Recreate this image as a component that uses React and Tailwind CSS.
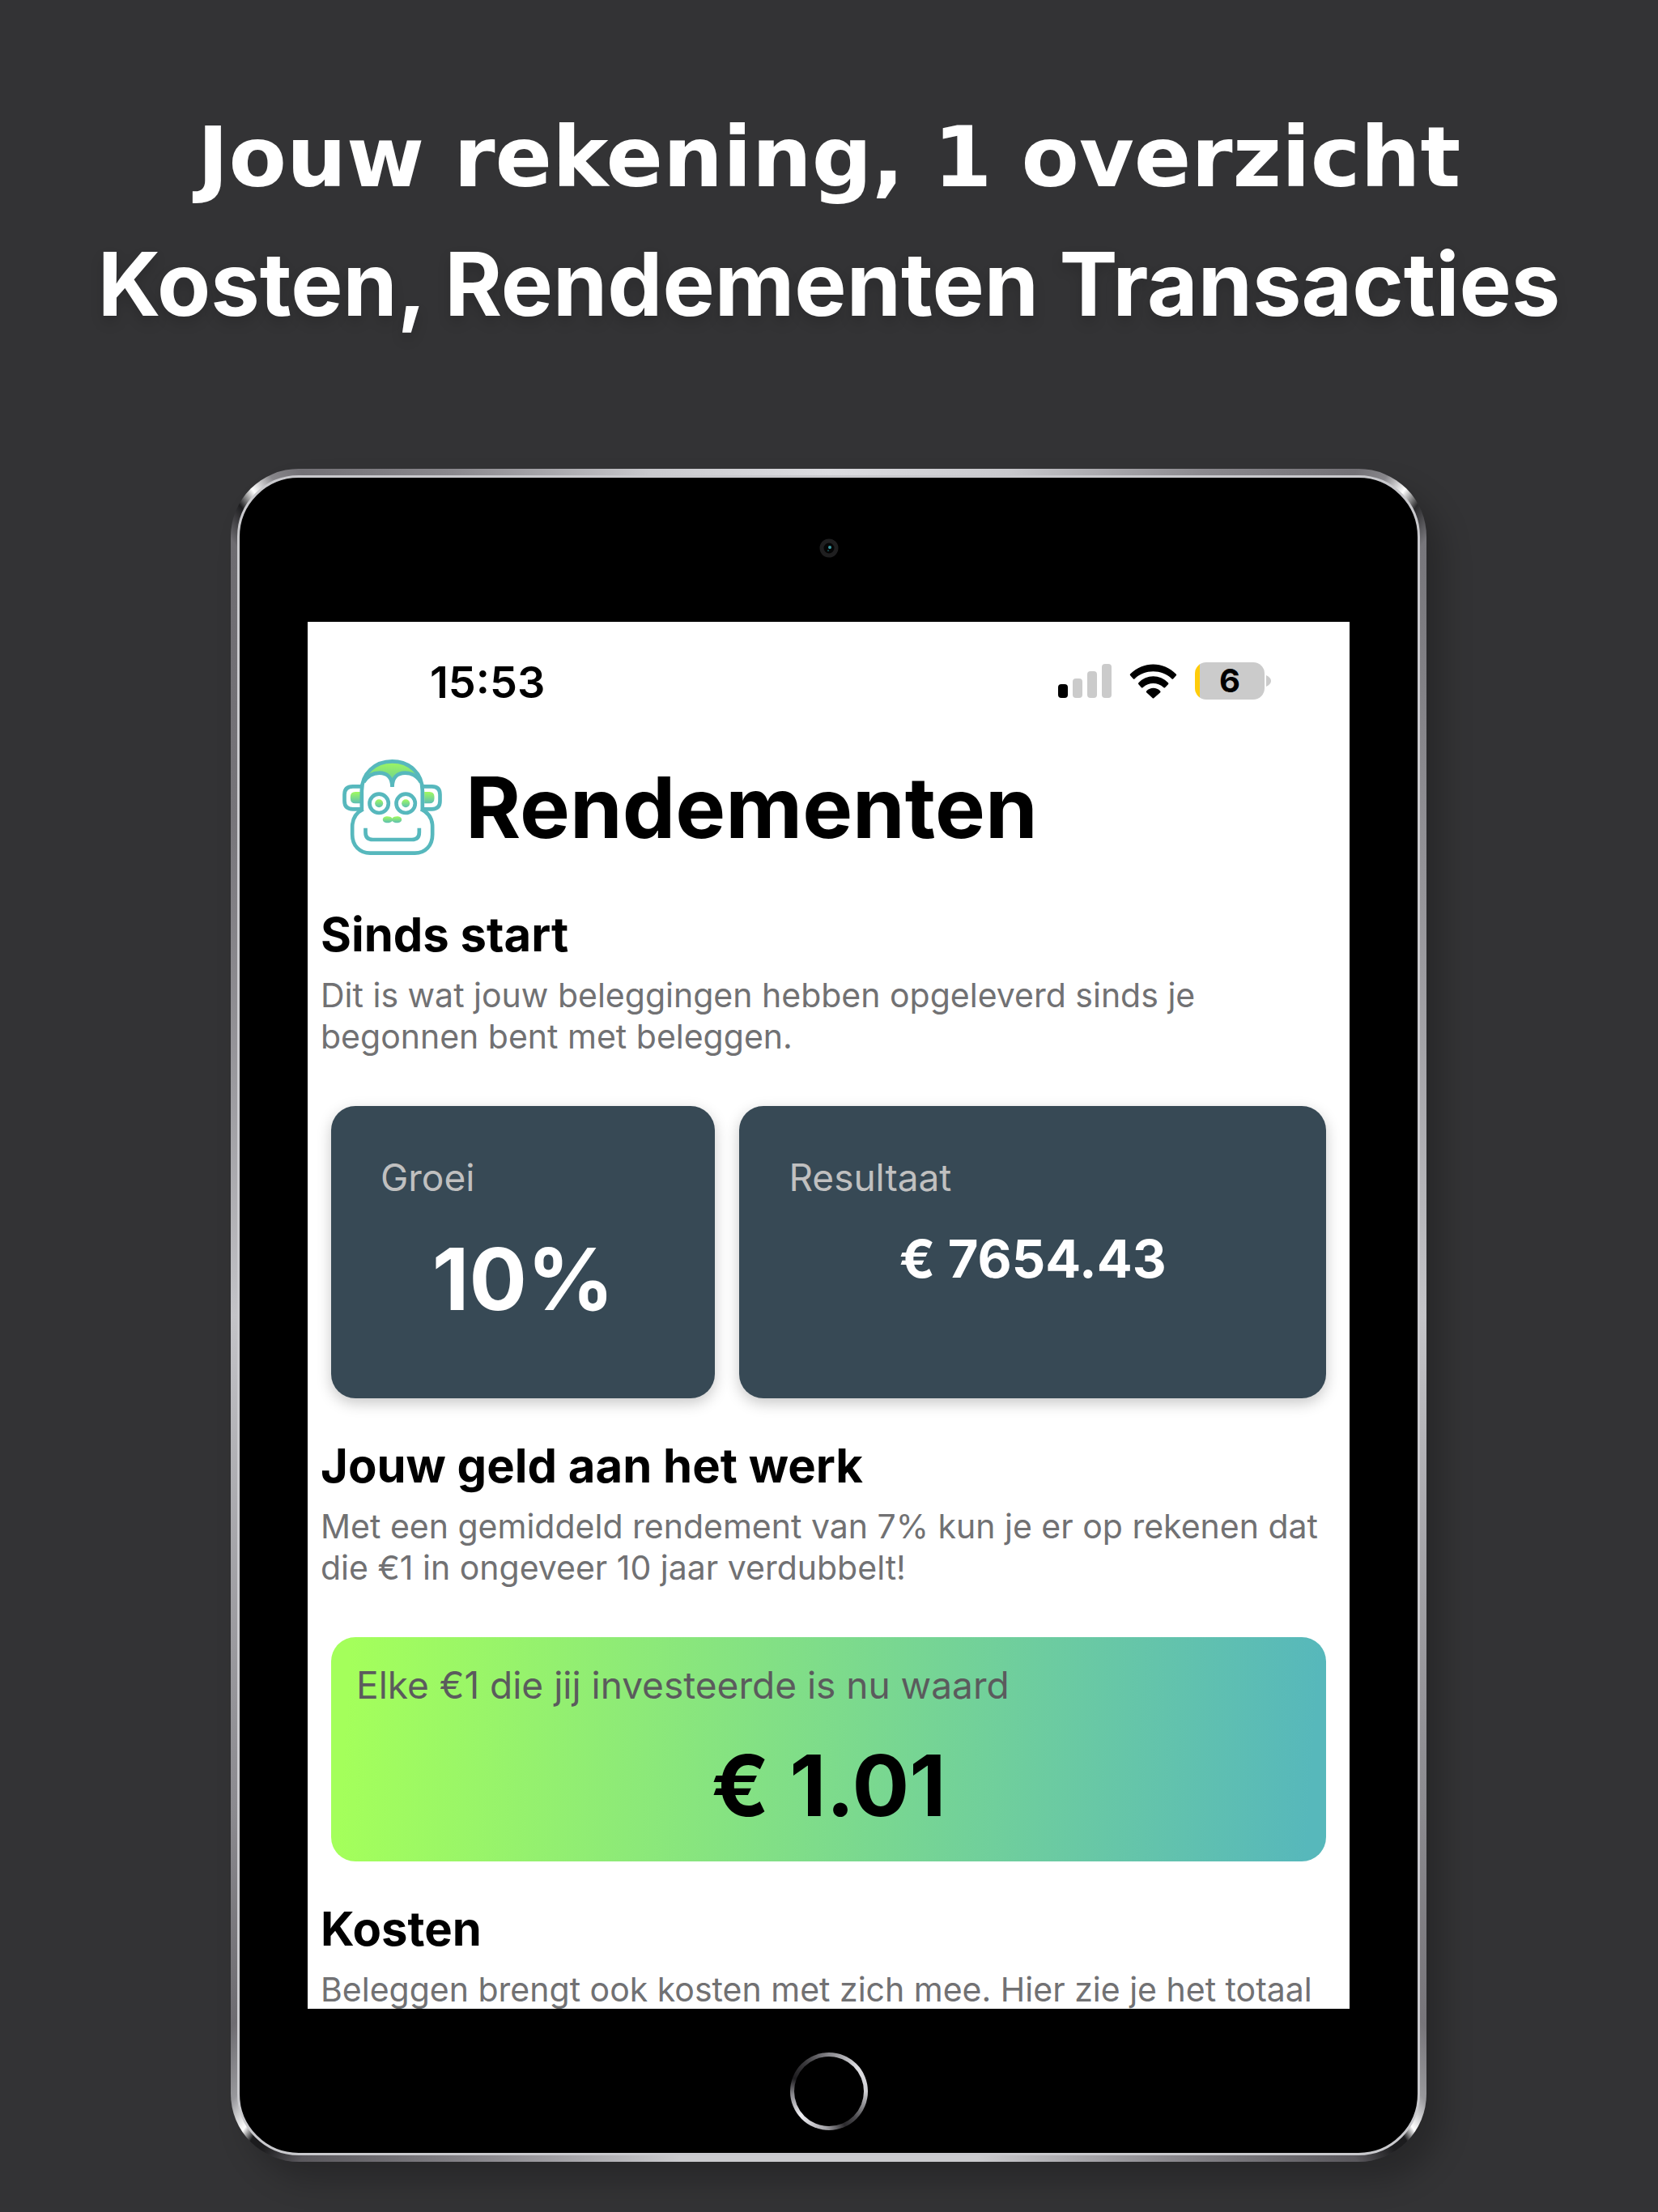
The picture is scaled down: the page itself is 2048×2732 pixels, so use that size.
import React from "react";

const frame =
  "conic-gradient(from 0deg, #dcdce0 0deg, #c9c9cd 12deg, #8b898e 24deg, #737176 32deg, #87868a 33.6deg, #ffffff 34.9deg, #2a2a2c 36deg, #77767b 37.6deg, #8f8e93 50deg, #c4c4c8 90deg, #8b8a8f 130deg, #77757a 140deg, #98989c 142.8deg, #ffffff 144.3deg, #1c1c1e 145deg, #1c1c1e 145.8deg, #5a585d 148deg, #8b898e 158deg, #cbcbce 170deg, #cbcbce 190deg, #8b898e 202deg, #5a585d 212deg, #1c1c1e 214.2deg, #1c1c1e 215deg, #ffffff 215.7deg, #98989c 217.2deg, #6e6c71 220deg, #8b8a8f 230deg, #c4c4c8 270deg, #77757a 310deg, #6e6c71 322.4deg, #1c1c1e 324deg, #ffffff 325.1deg, #87868a 326.4deg, #737176 328deg, #8b898e 336deg, #c9c9cd 348deg, #dcdce0 360deg)";

function Monkey() {
  return (
    <svg viewBox="64 78 380 366" className="h-[122px] w-[127px] shrink-0" fill="none" aria-hidden="true">
      <defs>
        <linearGradient id="leaf" x1="0" y1="0" x2="0" y2="1">
          <stop offset="0" stopColor="#9ff760" />
          <stop offset="1" stopColor="#6fd28f" />
        </linearGradient>
        <linearGradient id="ear" x1="0" y1="0" x2="0" y2="1">
          <stop offset="0" stopColor="#a0fa5e" />
          <stop offset="1" stopColor="#5cbfb4" />
        </linearGradient>
      </defs>
      <path d="M158 150C176 112 210 91 254 91S332 112 350 150C330 130 268 118 254 164C240 118 178 130 158 150Z" fill="url(#leaf)" />
      <path d="M99 222Q99 204 117 204H136V247H117Q99 247 99 229ZM410 222Q410 204 392 204H373V247H392Q410 247 410 229Z" fill="url(#ear)" />
      <g stroke="#57b8bd" strokeWidth="14">
        <path d="M141 276V200C141 135 190 91 254 91S366 135 366 200V276" />
        <path d="M141 184H108Q77 184 77 214V238Q77 268 108 268H141M366 184H401Q431 184 431 214V238Q431 268 401 268H366" />
        <path d="M146 268C118 282 106 304 106 334V362C106 404 134 431 172 431H338C376 431 403 404 403 362V334C403 304 391 282 361 268" />
        <path d="M148 168C162 146 182 134 206 134C234 134 254 150 254 186C254 150 274 134 302 134C326 134 348 148 360 168" />
        <circle cx="205" cy="247" r="35" />
        <circle cx="304" cy="247" r="35" />
        <path d="M155 338V354Q155 381 182 381H327Q354 381 354 354V338" />
      </g>
      <circle cx="205" cy="247" r="15" fill="url(#ear)" />
      <circle cx="304" cy="247" r="15" fill="url(#ear)" />
      <path d="M219 307C219 292 246 292 254 302C262 292 289 292 289 307C289 322 262 322 254 312C246 322 219 322 219 307Z" fill="url(#ear)" />
    </svg>
  );
}

function StatusIcons() {
  return (
    <div className="flex items-center">
      <svg viewBox="0 0 66 42" className="mr-[22px] h-[42px] w-[66px]" aria-hidden="true">
        <rect x="0" y="25" width="12" height="17" rx="4" fill="#000" />
        <rect x="18" y="18" width="12" height="24" rx="4" fill="#cbcbcb" />
        <rect x="36" y="9" width="12" height="33" rx="4" fill="#cbcbcb" />
        <rect x="54" y="0" width="12" height="42" rx="4" fill="#cbcbcb" />
      </svg>
      <svg viewBox="345 778 176 128" className="mr-[22px] h-[43px] w-[59px]" aria-hidden="true">
        <path d="M348 815Q346 818 349 821L359 832Q362 835 365 832C402 797 464 797 501 832Q504 835 507 832L517 821Q520 818 517 815C470 767 396 767 348 815Z" />
        <path d="M379 847Q376 850 379 853L389 864Q392 867 395 864C417 845 449 845 471 864Q474 867 477 864L488 853Q491 850 488 847C458 815 408 815 379 847Z" />
        <path d="M408 878Q406 881 408 883L430 903Q433 906 436 903L459 883Q461 881 459 878C445 863 422 863 408 878Z" />
      </svg>
      <div className="w-[86px] rounded-[14px] bg-linear-to-r from-[#ffcc0a] from-[6px] to-[#cbcbcb] to-[6px] text-center text-[40px] leading-[46px] font-bold">
        6
      </div>
      <svg viewBox="0 0 6 14" className="ml-0.5 h-[14px] w-[6px]" aria-hidden="true">
        <path d="M0 0Q6 3 6 7T0 14Z" fill="#cbcbcb" />
      </svg>
    </div>
  );
}

function Section({ title, children }) {
  return (
    <div className="px-4">
      <h3 className="text-[58px] leading-[72px] font-bold">{title}</h3>
      <p className="mt-[14px] text-[41px] leading-[51px] text-[#717173]">{children}</p>
    </div>
  );
}

export default function App() {
  return (
    <main className="min-h-screen overflow-hidden bg-[#333335] pb-[62px] font-['Inter',sans-serif]">
      <header className="flex flex-col items-center pt-[134px] text-center whitespace-nowrap text-white">
        <h1 className="font-['DejaVu_Sans',sans-serif] text-[104px] leading-[120px] font-bold">Jouw rekening, 1 overzicht</h1>
        <h2 className="mt-8 text-[108px] leading-[130px] font-bold text-shadow-[0_8px_16px_rgb(0_0_0/0.15)]">
          Kosten, Rendementen Transacties
        </h2>
      </header>

      <div className="mt-[163px] pr-[286px] pl-[285px]">
        <div className="rounded-[84px] p-2 shadow-[20px_24px_36px_rgb(0_0_0/0.22)]" style={{ backgroundImage: frame }}>
          <div className="flex flex-col rounded-[76px] border-[3px] border-[#c9c9cd] bg-black px-[84px]">
            <div className="flex h-[178px] items-center justify-center pb-1">
              <svg viewBox="0 0 24 24" className="size-6" aria-hidden="true">
                <circle cx="12" cy="12" r="9" fill="#050505" stroke="#1f1f20" strokeWidth="5" />
                <circle cx="13" cy="11" r="2" fill="#3a9aa2" />
                <circle cx="11" cy="15" r="1" fill="#155055" />
              </svg>
            </div>

            <section className="aspect-[1287/1713] overflow-hidden bg-white text-black">
              <div className="flex h-[146px] items-center justify-between pr-[97px] pl-[151px]">
                <span className="pt-1 text-[54px] leading-none font-semibold">15:53</span>
                <StatusIcons />
              </div>

              <div className="mt-[22px] flex items-center gap-[27px] pl-[41px]">
                <Monkey />
                <h2 className="text-[104px] leading-[122px] font-bold">Rendementen</h2>
              </div>

              <div className="mt-[60px]">
                <Section title="Sinds start">
                  Dit is wat jouw beleggingen hebben opgeleverd sinds je begonnen bent met beleggen.
                </Section>
              </div>

              <div className="mt-[60px] grid grid-cols-[474fr_724fr] gap-[30px] px-[29px]">
                <div className="h-[361px] rounded-[30px] bg-[#374955] px-[61px] pt-[58px] shadow-[0_6px_18px_rgb(0_0_0/0.22)]">
                  <div className="text-[46px] leading-[60px] text-[#c0c0c0]">Groei</div>
                  <div className="mt-[34px] text-center text-[106px] leading-[124px] font-bold text-white">10%</div>
                </div>
                <div className="h-[361px] rounded-[30px] bg-[#374955] px-[61px] pt-[58px] shadow-[0_6px_18px_rgb(0_0_0/0.22)]">
                  <div className="text-[46px] leading-[60px] text-[#c0c0c0]">Resultaat</div>
                  <div className="mt-[31px] text-center text-[65px] leading-[80px] font-bold text-white">€ 7654.43</div>
                </div>
              </div>

              <div className="mt-[47px]">
                <Section title="Jouw geld aan het werk">
                  Met een gemiddeld rendement van 7% kun je er op rekenen dat die €1 in ongeveer 10 jaar verdubbelt!
                </Section>
              </div>

              <div className="mx-[29px] mt-[60px] h-[277px] rounded-[30px] bg-linear-[94deg] from-[#a4ff5b] from-2% to-[#57b8bb] to-98% px-[31px] pt-[29px]">
                <div className="text-[46px] leading-[60px] text-[#5b5b5d]">Elke €1 die jij investeerde is nu waard</div>
                <div className="mt-8 text-center text-[105px] leading-[124px] font-bold">€ 1.01</div>
              </div>

              <div className="mt-[47px]">
                <Section title="Kosten">Beleggen brengt ook kosten met zich mee. Hier zie je het totaal</Section>
              </div>
            </section>

            <div className="flex h-[178px] items-center justify-center pt-[26px]">
              <button
                aria-label="Home"
                className="size-24 rounded-full p-[5px]"
                style={{
                  backgroundImage:
                    "conic-gradient(#88878c, #dedee2 50deg, #d0d0d4 90deg, #4a494d 135deg, #2b2a2d 155deg, #a5a4a9 185deg, #f0f0f4 230deg, #8a898e 265deg, #1d1c1f 290deg, #3a393c 320deg, #88878c)",
                }}
              >
                <span className="block size-full rounded-full bg-black" />
              </button>
            </div>
          </div>
        </div>
      </div>
    </main>
  );
}
